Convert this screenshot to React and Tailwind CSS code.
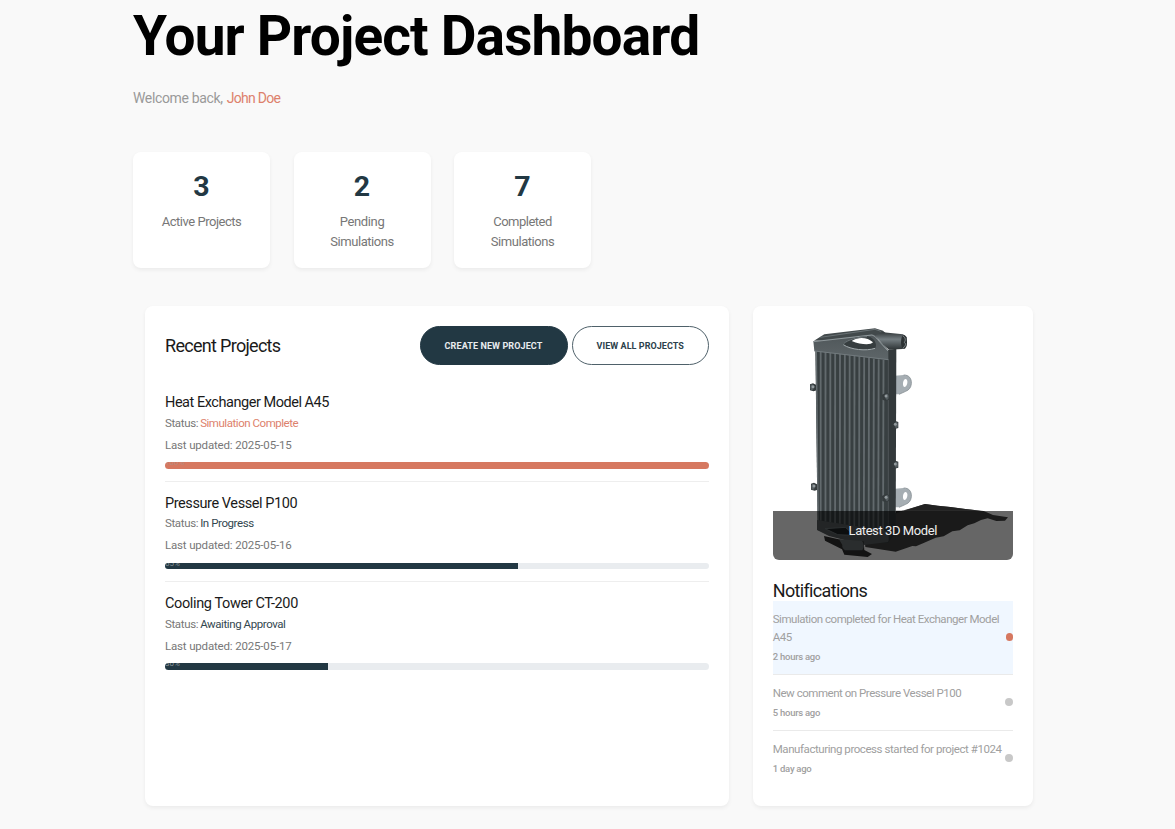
const stats = [
  { value: "3", lines: [["Active Projects", "tracking-[-0.48px]"]] },
  { value: "2", lines: [["Pending", "tracking-[-0.36px]"], ["Simulations", "tracking-[-0.44px]"]] },
  { value: "7", lines: [["Completed", "tracking-[-0.51px]"], ["Simulations", "tracking-[-0.44px]"]] },
];

const projects = [
  {
    name: "Heat Exchanger Model A45", nameCls: "tracking-[-0.46px]",
    status: "Simulation Complete", statusCls: "text-[#dd816c] tracking-[-0.46px]",
    date: "2025-05-15", progress: 100, bar: "bg-[#d67860]", label: "text-[#b98a7c]",
  },
  {
    name: "Pressure Vessel P100", nameCls: "tracking-[-0.42px]",
    status: "In Progress", statusCls: "text-[#33474f] tracking-[-0.42px]",
    date: "2025-05-16", progress: 65, bar: "bg-[#223843]", label: "text-[#8a9499]",
  },
  {
    name: "Cooling Tower CT-200", nameCls: "tracking-[-0.38px]",
    status: "Awaiting Approval", statusCls: "text-[#33474f] tracking-[-0.42px]",
    date: "2025-05-17", progress: 30, bar: "bg-[#223843]", label: "text-[#8a9499]",
  },
];

const notifications = [
  { lines: ["Simulation completed for Heat Exchanger Model", "A45"], cls: "tracking-[-0.47px]", time: "2 hours ago", unread: true },
  { lines: ["New comment on Pressure Vessel P100"], cls: "tracking-[-0.47px]", time: "5 hours ago" },
  { lines: ["Manufacturing process started for project #1024"], cls: "tracking-[-0.435px]", time: "1 day ago" },
];

const fins = Array.from({ length: 14 }, (_, i) => i);

function Bolt({ x, y, flip }) {
  return (
    <g transform={`translate(${x} ${y})${flip ? " scale(-1 1)" : ""}`}>
      <path d="M-10-6 L2-12 L11-9 V9 L0 12 L-9 9Z" fill="#353b3d" />
      <ellipse cx="5" cy="0" rx="5" ry="9" fill="#555d60" />
      <circle cx="2" cy="-2" r="4.5" fill="#929a9d" />
    </g>
  );
}

function Bracket({ y }) {
  return (
    <g transform={`translate(-2 ${y})`}>
      <path
        fillRule="evenodd"
        d="M436-18 L462-20 C478-20 486-10 485 6 C484 18 478 25 468 29 L448 38 L436 38Z M467-8 C459-7 457 16 465 16 C474 14 477-8 467-8Z"
        fill="#a6aeb3"
      />
      <path d="M462-20 C478-20 486-10 485 6 C484 18 478 25 468 29 L448 38" fill="none" stroke="#858e93" strokeWidth="2.5" />
    </g>
  );
}

function Radiator() {
  return (
    <svg viewBox="68 78 720 702" preserveAspectRatio="none" className="block h-full w-full">
      <defs>
        <linearGradient id="cap" x1="0" y1="0" x2="0" y2="1">
          <stop offset="0" stopColor="#4f5659" />
          <stop offset="1" stopColor="#5e6669" />
        </linearGradient>
        <linearGradient id="pipe" x1="0" y1="0" x2="0" y2="1">
          <stop offset="0" stopColor="#33393b" />
          <stop offset="0.4" stopColor="#747d81" />
          <stop offset="1" stopColor="#2d3335" />
        </linearGradient>
      </defs>
      <path
        d="M430 640 L524 612 L562 617 L600 621 L645 627 L700 633 L728 645 L773 652 L764 662 L738 663 L712 655 L692 660 L672 670 L652 676 L628 691 L606 694 L580 709 L556 713 L520 729 L497 739 L486 738 L436 755 L345 741 L340 690Z"
        fill="#424242"
      />
      <path d="M437 640 L524 612 L562 617 L600 621 L645 627 L692 632.5 H437Z" fill="#222222" />
      <Bracket y={245} />
      <Bracket y={584} />
      <Bolt x={190} y={262} flip />
      <Bolt x={193} y={560} flip />
      <path d="M410 150 L438 146 L436 700 L412 728Z" fill="#33393b" />
      <path d="M195 150 L415 176 L415 728 L335 722 L202 690Z" fill="#383f41" />
      {fins.map((i) => (
        <path
          key={i}
          d={`M${211 + i * 14.5} ${154 + i * 2} L${211 + i * 14.4} ${662 + i * 2.4}`}
          stroke="#626a6d"
          strokeWidth="5.5"
        />
      ))}
      <path d="M198 154 L204 688" stroke="#687073" strokeWidth="4" />
      <path d="M414 178 V724" stroke="#4d5457" strokeWidth="3" />
      <path d="M191 122 L222 103 L374 85 L398 92 L408 101 L376 110 L300 116Z" fill="#42494b" />
      <path d="M210 112 L374 88 L392 94" fill="none" stroke="#697174" strokeWidth="3" />
      <path d="M374 106 L398 97 L458 103 L470 112 L468 139 L456 147 L416 149 L398 134Z" fill="url(#pipe)" />
      <ellipse cx="461" cy="126" rx="9" ry="21" fill="#2c3133" />
      <path d="M458 108 C465 112 467 120 462 127 C469 132 464 141 458 143" fill="none" stroke="#838b8e" strokeWidth="3" />
      <path d="M189 123 L365 103 Q376 104 383 117 L414 151 L414 180 L192 154Z" fill="url(#cap)" />
      <path d="M190 125 L365 105 Q375 107 382 119 L413 153" fill="none" stroke="#8f989b" strokeWidth="3" />
      <path d="M193 153 L414 179" stroke="#778083" strokeWidth="2.5" />
      <path d="M278 133 C288 119 322 109 352 109 C373 112 382 136 374 145 C352 155 296 149 278 133Z" fill="#363d3f" />
      <path d="M304 123 C322 110 352 111 368 127 C361 136 331 134 304 123Z" fill="#ffffff" />
      <path d="M279 134 C300 149 348 154 374 145" fill="none" stroke="#a4acaf" strokeWidth="3" />
      <path d="M280 131 C293 119 320 112 350 110" fill="none" stroke="#798285" strokeWidth="2.5" />
      <Bolt x={405} y={290} />
      <Bolt x={433} y={375} />
      <Bolt x={433} y={494} />
      <Bolt x={405} y={594} />
      <path d="M200 660 L413 694 L413 726 L340 735 L236 708 L200 690Z" fill="#575e60" />
      <path d="M224 686 L285 682 Q300 692 306 706 L262 704Z" fill="#1f2426" stroke="#6d7679" strokeWidth="3" />
      <path d="M221 708 L275 720 L340 724 L342 750 L365 762 L352 771 L282 764 L275 748 L224 722Z" fill="#303030" />
      <path d="M266 718 L335 722 Q345 736 336 751 L284 751 Q274 744 276 735Z" fill="#6a7173" />
    </svg>
  );
}

export default function App() {
  return (
    <div className="h-[829px] overflow-hidden bg-[#f9f9f9] pl-[133px] font-['Roboto','Liberation_Sans',sans-serif]">
      <h1 className="h-[72px] whitespace-nowrap text-[55px] leading-[72px] font-bold tracking-[-0.85px] text-black">
        Your Project Dashboard
      </h1>
      <p className="mt-[14px] flex gap-[4px] text-[14px] leading-6 whitespace-nowrap text-[#999999]">
        <span className="tracking-[-0.35px]">Welcome back,</span>
        <span className="tracking-[-0.7px] text-[#dd816c]">John Doe</span>
      </p>

      <section className="mt-[42px] flex gap-[23.5px]">
        {stats.map((s, i) => (
          <div key={i} className="h-[115.5px] w-[137px] rounded-lg bg-white pt-[17px] text-center shadow-[0_2px_4px_rgba(0,0,0,0.06)]">
            <div className="text-[28.5px] leading-[35px] font-bold text-[#223843]">{s.value}</div>
            <div className="mt-[7.5px] text-[13px] leading-5 text-[#777777]">
              {s.lines.map(([text, cls]) => (
                <div key={text} className={cls}>{text}</div>
              ))}
            </div>
          </div>
        ))}
      </section>

      <div className="mt-[38.5px] ml-3 flex h-[499.5px] gap-[24.5px]">
        <section className="w-[583.5px] rounded-lg bg-white p-5 shadow-[0_2px_4px_rgba(0,0,0,0.06)]">
          <header className="flex h-[38.5px] items-center justify-between">
            <h2 className="pt-[2px] text-[18px] leading-6 tracking-[-0.7px] text-[#1a1a1a]">Recent Projects</h2>
            <div className="flex gap-[4.5px] text-[9px] font-bold whitespace-nowrap">
              <button className="h-[38.5px] w-[148px] rounded-full border border-[#223843] bg-[#223843] pt-[2px] tracking-[0.11px] text-[#e9ecef]">
                CREATE NEW PROJECT
              </button>
              <button className="h-[38.5px] w-[136.5px] rounded-full border border-[#4f616a] bg-white pt-[2px] tracking-[0.06px] text-[#2c414b]">
                VIEW ALL PROJECTS
              </button>
            </div>
          </header>
          <div className="mt-[16.5px]">
            {projects.map((p, i) => (
              <article key={p.name} className={"h-[100.5px] pt-[11px] " + (i < 2 ? "border-b border-[#eeeeee]" : "")}>
                <h3 className={"h-[19.5px] text-[14.5px] leading-[21px] text-[#1a1a1a] " + p.nameCls}>{p.name}</h3>
                <p className="flex gap-[2px] text-[11.5px] leading-[22px] text-[#777777]">
                  <span className="tracking-[-0.36px]">Status:</span>
                  <span className={p.statusCls}>{p.status}</span>
                </p>
                <p className="text-[11.5px] leading-[22px] tracking-[-0.17px] text-[#777777]">Last updated: {p.date}</p>
                <div className="mt-[6.5px] h-[6.5px] overflow-hidden rounded-full bg-[#e9ecef]">
                  <div className={"flex h-full items-start " + p.bar} style={{ width: p.progress + "%" }}>
                    <span className={"-mt-[4px] text-[8px] leading-[9px] " + p.label}>{p.progress}%</span>
                  </div>
                </div>
              </article>
            ))}
          </div>
        </section>

        <section className="w-[279.5px] rounded-lg bg-white px-[19.75px] pt-5 shadow-[0_2px_4px_rgba(0,0,0,0.06)]">
          <div className="relative h-[234px] overflow-hidden rounded-b-[6px]">
            <Radiator />
            <div className="absolute inset-x-0 bottom-0 h-[49.5px] bg-black/60 pt-[10px] text-center text-[13px] leading-5 tracking-[-0.42px] text-[#eeeeee]">
              Latest 3D Model
            </div>
          </div>
          <h2 className="mt-[20px] h-[21px] text-[18px] leading-[21px] tracking-[-0.66px] text-[#1a1a1a]">Notifications</h2>
          {notifications.map((n, i) => (
            <div
              key={i}
              className={
                "flex items-center justify-between whitespace-nowrap pt-[9px] text-[#a0a0a0] " +
                (n.unread ? "h-[73.5px] bg-[#f0f7ff] " : "h-[56px] ") +
                (i < 2 ? "border-b border-[#eaeaea]" : "")
              }
            >
              <div className="h-full w-0">
                {n.lines.map((l) => (
                  <p key={l} className={"text-[11.5px] leading-[18px] " + n.cls}>{l}</p>
                ))}
                <p className="mt-[2px] text-[9.5px] leading-[17px] font-medium tracking-[-0.26px]">{n.time}</p>
              </div>
              <span
                className={
                  "-mt-[9.5px] h-2 shrink-0 rounded-full " + (n.unread ? "w-[7px] bg-[#d67860]" : "w-2 bg-[#c8c8c8]")
                }
              />
            </div>
          ))}
        </section>
      </div>
    </div>
  );
}
